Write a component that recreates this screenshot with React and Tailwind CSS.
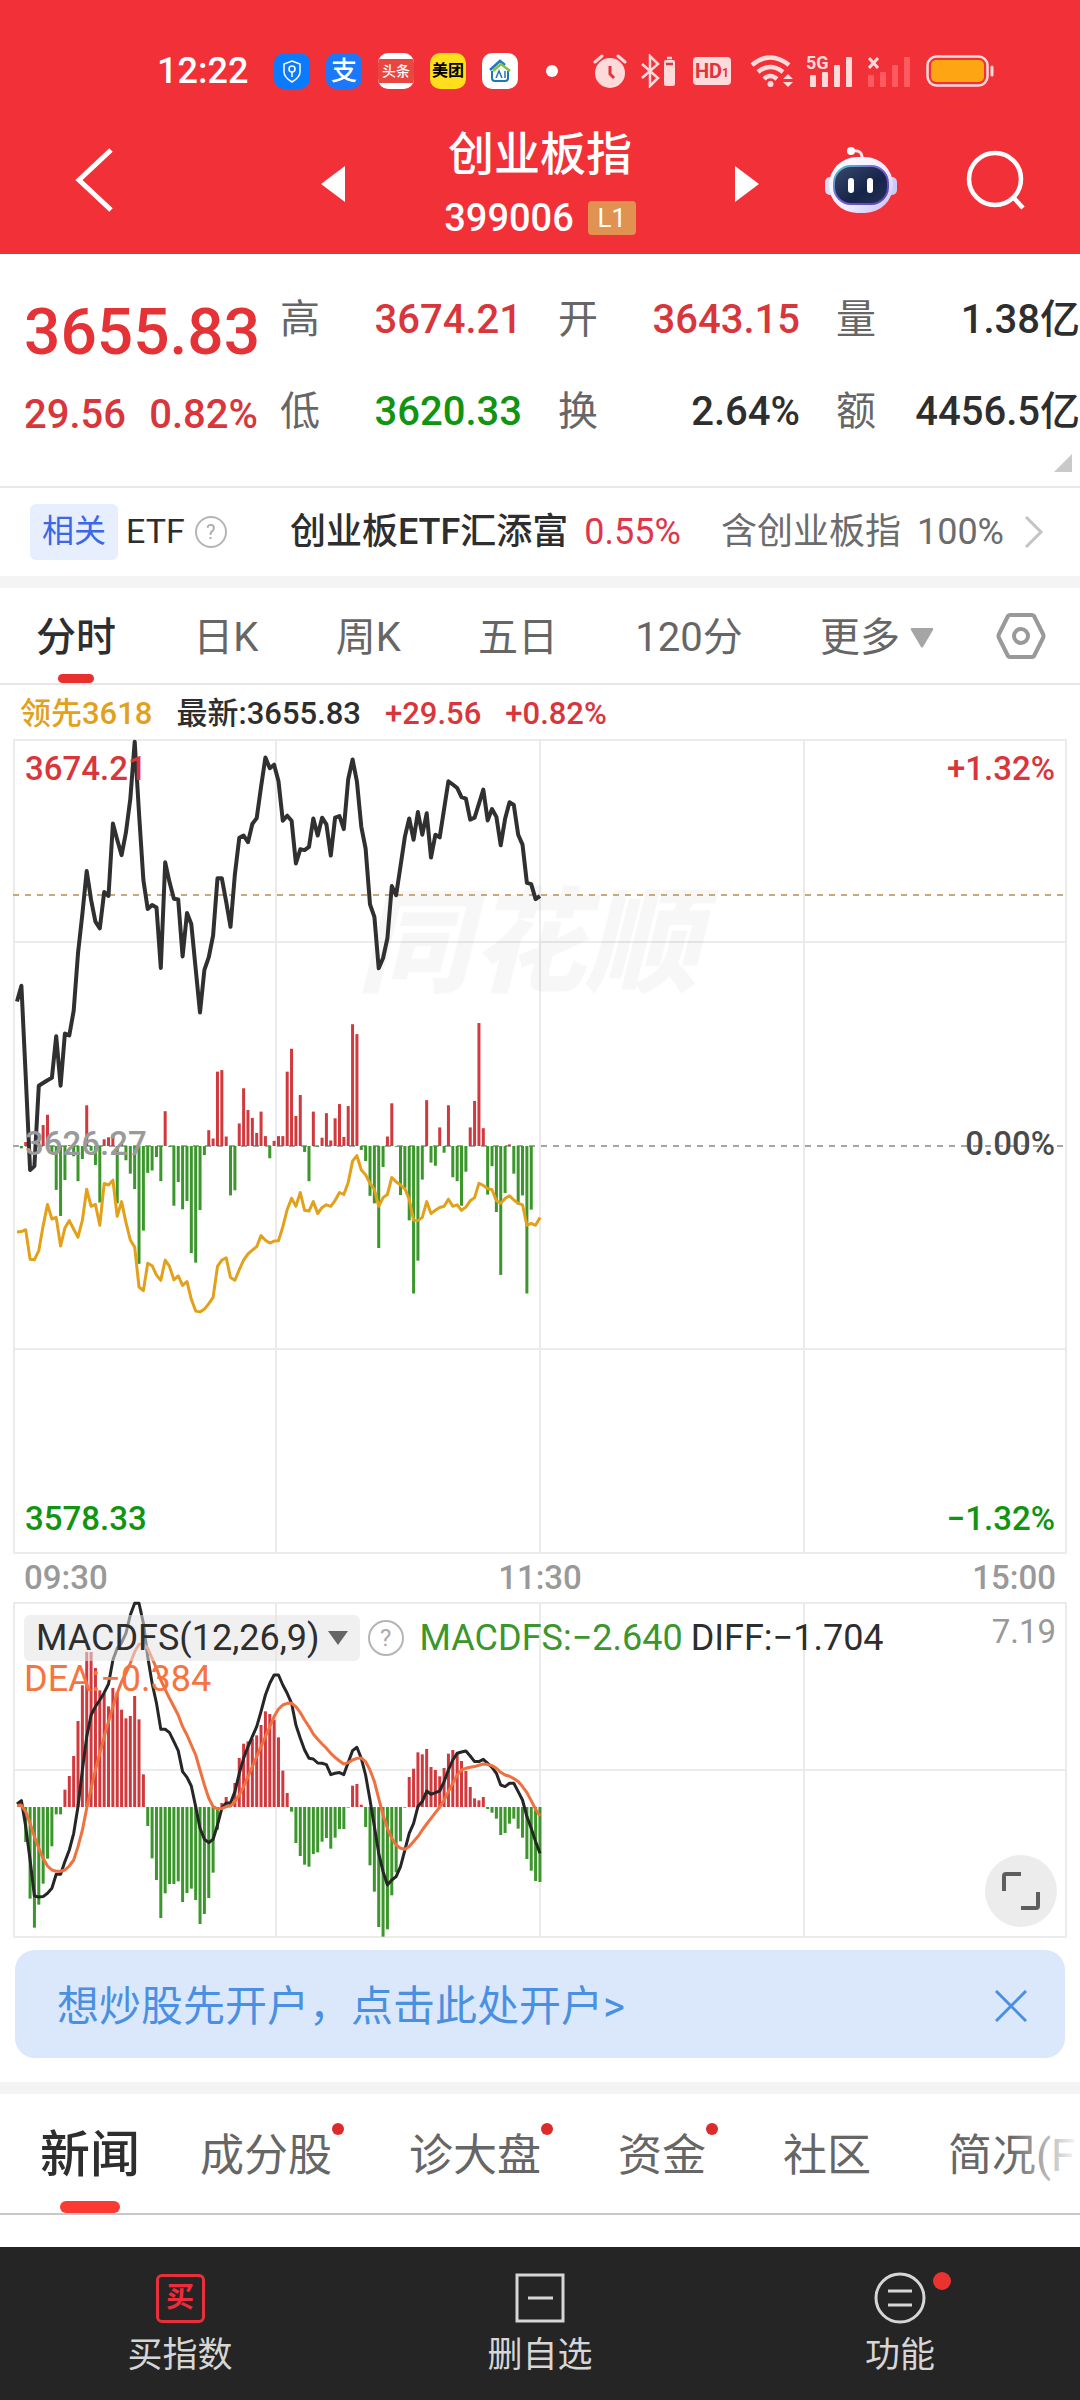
import React from 'react';

const PRICE = [
  712, 672, 900, 1138, 1128, 925, 918, 911, 905, 800, 925, 793, 798, 735, 590, 490, 382, 455, 510, 527,
  435, 445, 262, 303, 342, 285, 200, 55, 235, 405, 478, 468, 474, 627, 360, 410, 452, 454, 598, 488,
  516, 630, 740, 632, 600, 545, 400, 400, 460, 523, 390, 298, 292, 309, 263, 248, 170, 95, 122, 113,
  155, 255, 242, 255, 363, 327, 329, 321, 249, 292, 247, 264, 343, 247, 243, 276, 150, 100, 155, 270,
  325, 466, 498, 628, 602, 552, 420, 443, 370, 295, 249, 303, 233, 290, 236, 348, 290, 297, 225, 155,
  163, 172, 195, 199, 252, 247, 212, 176, 254, 225, 245, 317, 250, 208, 215, 290, 315, 412, 415, 453, 445,
];

const LEAD = [
  1295, 1294, 1289, 1364, 1365, 1342, 1280, 1225, 1262, 1258, 1330, 1285, 1266, 1288, 1308, 1265, 1187, 1230, 1225, 1278,
  1172, 1176, 1164, 1255, 1218, 1270, 1315, 1333, 1434, 1443, 1374, 1380, 1404, 1417, 1366, 1382, 1416, 1406, 1430, 1420,
  1465, 1495, 1497, 1490, 1476, 1460, 1382, 1366, 1360, 1410, 1417, 1390, 1366, 1350, 1341, 1332, 1304, 1316, 1323, 1318,
  1317, 1282, 1238, 1210, 1230, 1195, 1240, 1242, 1218, 1248, 1233, 1226, 1230, 1215, 1195, 1200, 1170, 1115, 1102, 1138,
  1150, 1172, 1187, 1230, 1208, 1200, 1157, 1168, 1176, 1186, 1212, 1265, 1266, 1258, 1218, 1248, 1240, 1233, 1230, 1212,
  1230, 1226, 1240, 1232, 1216, 1208, 1172, 1177, 1185, 1188, 1216, 1222, 1210, 1203, 1214, 1222, 1226, 1278, 1273, 1278, 1258,
];

const FLOW = [
  0, -6, 10, 0, 0, 20, 53, 79, -18, -111, -177, -86, 2, -26, -89, -33, 103, -12, -48, -143,
  17, 22, 30, -145, 5, -36, -70, -109, -298, -214, -68, -62, -28, -89, 88, -2, -151, -91, -160, -139,
  -271, -295, -162, -23, 40, 19, 188, 192, 24, -125, -112, 57, 146, 91, 71, 33, 87, 25, -31, 13,
  25, 25, 188, 246, 76, 129, -15, -89, 87, -2, 21, 83, 14, 70, 106, 23, 101, 308, 283, -10,
  -38, -126, -145, -258, -53, 24, 108, -2, -124, -106, -188, -373, -290, -85, 116, -42, -50, 47, -17, 103,
  -79, -89, -151, -65, 47, 114, 311, 45, -123, -51, -167, -326, -119, 4, -70, -148, -125, -373, -161, 0, 0,
];

const MACD = [
  0, 8, -105, -275, -362, -293, -230, -155, -118, -22, -22, 52, 93, 153, 258, 365, 465, 465, 417, 350,
  340, 302, 357, 344, 292, 266, 273, 333, 263, 98, -57, -154, -219, -333, -259, -231, -231, -223, -285, -258,
  -245, -279, -351, -321, -273, -197, -68, 12, 30, 15, 72, 147, 190, 197, 205, 215, 246, 287, 279, 262,
  209, 109, 42, -14, -108, -147, -173, -179, -141, -136, -104, -93, -125, -92, -66, -66, -2, 64, 69, 7,
  -60, -175, -254, -360, -389, -367, -265, -196, -103, -2, 90, 115, 164, 158, 174, 120, 111, 92, 117, 160,
  171, 163, 138, 108, 60, 26, 20, 30, -6, -17, -35, -84, -78, -50, -35, -65, -92, -156, -191, -222, -225,
];

const DIFF = [
  792, 782, 860, 960, 1068, 1071, 1070, 1060, 1045, 1003, 1003, 965, 930, 880, 800, 690, 590, 525, 500, 480,
  458, 432, 360, 325, 308, 280, 225, 190, 190, 250, 350, 430, 490, 568, 568, 578, 605, 632, 695, 712,
  738, 800, 865, 898, 908, 898, 855, 805, 789, 789, 755, 700, 655, 620, 590, 560, 515, 465, 430, 405,
  405, 435, 460, 490, 555, 595, 630, 655, 657, 669, 670, 674, 704, 700, 698, 704, 668, 632, 622, 655,
  705, 780, 860, 940, 995, 1035, 1020, 1010, 980, 930, 880, 850, 800, 785, 753, 763, 758, 753, 725, 690,
  660, 640, 636, 633, 648, 665, 665, 658, 670, 682, 700, 735, 740, 730, 730, 755, 780, 830, 865, 905, 940,
];

const DEA = [
  797, 796, 815, 850, 890, 925, 955, 978, 990, 994, 994, 990, 978, 960, 920, 870, 805, 745, 690, 640,
  590, 545, 500, 460, 425, 400, 370, 335, 313, 313, 325, 355, 385, 420, 448, 475, 500, 525, 560, 585,
  615, 645, 690, 735, 775, 800, 807, 806, 800, 798, 785, 765, 740, 710, 680, 650, 620, 590, 560, 530,
  507, 495, 490, 490, 500, 518, 540, 560, 582, 598, 612, 625, 640, 652, 663, 672, 668, 660, 655, 654,
  665, 690, 725, 775, 825, 865, 895, 915, 925, 928, 920, 905, 890, 870, 852, 835, 818, 802, 780, 755,
  730, 705, 690, 685, 682, 680, 676, 672, 674, 677, 685, 697, 705, 709, 716, 725, 740, 758, 782, 808, 828,
];

const xAt = (i) => 4 + i * 4.358;
const toLine = (data, scale, shift) =>
  data.map((v, i) => `${xAt(i).toFixed(1)},${(v * scale + shift).toFixed(1)}`).join(' ');

function Bars({ data, zero, scale }) {
  return data.map((v, i) =>
    v === 0 ? null : (
      <rect
        key={i}
        x={xAt(i) - 1.5}
        width="3"
        y={v > 0 ? zero - v * scale : zero}
        height={Math.abs(v) * scale}
        fill={v > 0 ? '#d03a3e' : '#3b962b'}
      />
    )
  );
}

function Grid({ height, rows }) {
  return (
    <g stroke="#ebebeb" strokeWidth="2" fill="none">
      <rect x="1" y="1" width="1052" height={height - 2} />
      {[263, 527, 791].map((x) => (
        <line key={x} x1={x} x2={x} y1="0" y2={height} />
      ))}
      {rows.map((y) => (
        <line key={y} x1="0" x2="1054" y1={y} y2={y} />
      ))}
    </g>
  );
}

function StatusBar() {
  return (
    <div className="flex h-[142px] items-center pl-[157px]">
      <span className="w-[117px] text-4xl font-medium">12:22</span>
      <div className="flex gap-4">
        <span className="flex size-9 items-center justify-center rounded-[10px] bg-[#0a7bff]">
          <svg viewBox="0 0 36 36" className="size-9" fill="none" stroke="#fff" strokeWidth="1.5">
            <path d="M18 8l8 3v8c0 4-3 7-8 10-5-3-8-6-8-10v-8z" />
            <circle cx="18" cy="16" r="3" />
            <path d="M18 19v5" />
          </svg>
        </span>
        <span className="flex size-9 items-center justify-center rounded-[10px] bg-[#1b78fb] text-[26px] leading-none font-medium">支</span>
        <span className="flex size-9 items-center overflow-hidden rounded-[10px] bg-white">
          <span className="flex h-6 w-full items-center justify-center bg-[#ea4640] text-sm leading-none font-medium">头条</span>
        </span>
        <span className="flex size-9 items-center justify-center rounded-[10px] bg-[#ffdf1b] text-base leading-none font-bold text-black">美团</span>
        <span className="flex size-9 items-center justify-center rounded-[10px] bg-white">
          <svg viewBox="0 0 36 36" className="size-9" fill="none" strokeWidth="2.5">
            <path d="M10 18v7q0 3 3 3h10q3 0 3-3v-7" stroke="#1c78b8" strokeWidth="2" />
            <path d="M8 17l10-9 5 4" stroke="#1c78c8" />
            <path d="M11 18l8-7 9 7" stroke="#7fc241" />
            <path d="M14 25l3-7 3 7M23 18v7" stroke="#1c78b8" strokeWidth="1.5" />
          </svg>
        </span>
      </div>
      <span className="ml-7 size-3 rounded-full bg-white" />
      <div className="ml-[35px] flex items-center text-[#ffdadb]">
        <svg viewBox="0 0 34 36" className="h-9 w-[34px]" fill="currentColor">
          <circle cx="17" cy="20" r="15" />
          <path d="M2 9l7-6M32 9l-7-6" stroke="currentColor" strokeWidth="3" strokeLinecap="round" />
          <path d="M17 13v8l4 4" fill="none" stroke="#e2323a" strokeWidth="3" />
        </svg>
        <svg viewBox="0 0 34 34" className="ml-[14px] h-[34px] w-[34px]" fill="none" stroke="currentColor" strokeWidth="2.5">
          <path d="M1 10l16 14-8 8V2l8 8L1 24" />
          <rect x="23" y="6" width="11" height="26" rx="2" fill="currentColor" stroke="none" />
          <path d="M26 4h5" />
          <path d="M25 10h7" stroke="#e2323a" />
        </svg>
        <span className="ml-[18px] flex h-7 w-[38px] items-center justify-center rounded bg-[#ffdadb] text-xl leading-none font-bold text-[#e2323a]">
          HD<span className="pt-1 text-xs">1</span>
        </span>
        <svg viewBox="0 0 44 34" className="ml-[19px] h-[34px] w-11" fill="none" stroke="currentColor" strokeWidth="4.5">
          <path d="M2 11q18-15 37 0M8 18q12-10 25 0M14 25q6-6 13 0" />
          <circle cx="20.5" cy="30" r="3" fill="currentColor" stroke="none" />
          <path d="M33 25l5-5 5 5zM33 28l5 5 5-5z" fill="currentColor" stroke="none" />
        </svg>
        <div className="relative ml-3">
          <svg viewBox="0 0 48 34" className="h-[34px] w-12" fill="currentColor">
            <rect x="4" y="21" width="6" height="12" rx="1" />
            <rect x="16" y="18" width="6" height="15" rx="1" />
            <rect x="28" y="11" width="6" height="22" rx="1" />
            <rect x="40" y="3" width="6" height="30" rx="1" />
          </svg>
          <span className="absolute top-0 left-0 text-lg leading-none font-bold">5G</span>
        </div>
        <svg viewBox="0 0 44 34" className="ml-[14px] h-[34px] w-11" fill="#ff5a60">
          <rect x="0" y="21" width="6" height="12" rx="1" />
          <rect x="12" y="18" width="6" height="15" rx="1" />
          <rect x="24" y="11" width="6" height="22" rx="1" />
          <rect x="36" y="3" width="6" height="30" rx="1" />
          <path d="M1 4l9 10M10 4L1 14" stroke="#ffdadb" strokeWidth="3" />
        </svg>
        <svg viewBox="0 0 68 32" className="ml-[14px] h-8 w-[68px]" fill="none">
          <rect x="1.5" y="1.5" width="60" height="29" rx="9" stroke="#ffdadb" strokeWidth="2.5" />
          <rect x="5" y="5" width="53" height="22" rx="5" fill="#fda512" />
          <path d="M66 12v8" stroke="#ffdadb" strokeWidth="3" strokeLinecap="round" />
        </svg>
      </div>
    </div>
  );
}

function Header() {
  return (
    <header className="bg-[#f13038] text-white">
      <StatusBar />
      <div className="-mt-4 grid h-32 grid-cols-[1fr_438px_1fr]">
        <div className="flex items-center pb-5 pl-[75px]">
          <button type="button" aria-label="返回">
            <svg viewBox="0 0 40 66" className="h-[66px] w-10" fill="none" stroke="currentColor" strokeWidth="5">
              <path d="M36 3L4 33l32 30" />
            </svg>
          </button>
        </div>
        <div className="flex justify-between">
          <button type="button" aria-label="上一个" className="pb-3">
            <svg viewBox="0 0 24 36" className="h-9 w-6" fill="currentColor"><path d="M24 0v36L0 18z" /></svg>
          </button>
          <div className="flex flex-col items-center">
            <h1 className="text-[46px] leading-[56px] font-medium">创业板指</h1>
            <div className="mt-1 flex items-center gap-[14px]">
              <span className="text-[38px] leading-[64px] font-medium">399006</span>
              <span className="flex h-[34px] w-12 items-center justify-center rounded bg-[#e19150] text-[26px] leading-none">L1</span>
            </div>
          </div>
          <button type="button" aria-label="下一个" className="pb-3">
            <svg viewBox="0 0 24 36" className="h-9 w-6" fill="currentColor"><path d="M0 0v36l24-18z" /></svg>
          </button>
        </div>
        <div className="flex items-center justify-between pr-[52px] pb-5 pl-[66px]">
          <button type="button" aria-label="智能助手">
            <svg viewBox="0 0 72 68" className="h-[68px] w-[72px]">
              <defs>
                <linearGradient id="head" x1="0" y1="0" x2="1" y2="1">
                  <stop offset="0" stopColor="#fff" />
                  <stop offset=".6" stopColor="#ecebff" />
                  <stop offset="1" stopColor="#c9b8f2" />
                </linearGradient>
                <linearGradient id="rim" x1="0" y1="0" x2="1" y2="1">
                  <stop offset="0" stopColor="#52c7c9" />
                  <stop offset=".5" stopColor="#7a55d8" />
                  <stop offset="1" stopColor="#5048a8" />
                </linearGradient>
                <linearGradient id="visor" x1="0" y1="0" x2="1" y2="1">
                  <stop offset="0" stopColor="#39486e" />
                  <stop offset=".6" stopColor="#17244a" />
                  <stop offset="1" stopColor="#253056" />
                </linearGradient>
              </defs>
              <path d="M27 5q11-2 10 9" fill="none" stroke="#ffe5ec" strokeWidth="3" />
              <circle cx="26" cy="5" r="4" fill="#fff" />
              <rect x="0" y="31" width="12" height="18" rx="5" fill="#dcdcff" />
              <rect x="60" y="31" width="12" height="18" rx="5" fill="#c9ccfa" />
              <rect x="4" y="11" width="64" height="56" rx="28" fill="url(#head)" />
              <rect x="9" y="20" width="54" height="38" rx="17" fill="url(#visor)" stroke="url(#rim)" strokeWidth="2" />
              <rect x="23" y="32" width="6" height="15" rx="3" fill="#fff" />
              <rect x="42" y="32" width="6" height="15" rx="3" fill="#fff" />
            </svg>
          </button>
          <button type="button" aria-label="搜索">
            <svg viewBox="0 0 62 62" className="size-[62px]" fill="none" stroke="currentColor" strokeWidth="4.5">
              <circle cx="29" cy="30" r="26" />
              <path d="M47 48l10 11" />
            </svg>
          </button>
        </div>
      </div>
    </header>
  );
}

const RED = 'text-[#d9363c]';
const GREEN = 'text-[#119411]';
const INK = 'text-[#2e2e2e]';

function Pair({ label, value, tone }) {
  return (
    <div className="flex items-center justify-between">
      <dt className="text-[#666]">{label}</dt>
      <dd className={`font-medium ${tone}`}>{value}</dd>
    </div>
  );
}

function Quote() {
  return (
    <section className="relative grid h-[234px] grid-cols-[280fr_278fr_278fr_244fr] border-b-2 border-[#e8e8e8] text-[40px] leading-[60px]">
      <div className={`pt-[47px] pl-6 ${RED}`}>
        <div className="text-[64px] leading-[64px] font-medium text-[#e43236]">3655.83</div>
        <div className="mt-5 flex justify-between pr-[22px] font-medium">
          <span>29.56</span>
          <span>0.82%</span>
        </div>
      </div>
      <dl className="flex flex-col gap-8 pt-9 pr-9">
        <Pair label="高" value="3674.21" tone={RED} />
        <Pair label="低" value="3620.33" tone={GREEN} />
      </dl>
      <dl className="flex flex-col gap-8 pt-9 pr-9">
        <Pair label="开" value="3643.15" tone={RED} />
        <Pair label="换" value="2.64%" tone={INK} />
      </dl>
      <dl className="flex flex-col gap-8 pt-9">
        <Pair label="量" value="1.38亿" tone={INK} />
        <Pair label="额" value="4456.5亿" tone={INK} />
      </dl>
      <svg viewBox="0 0 18 18" className="absolute right-2 bottom-[14px] size-[18px]" fill="#c9c9c9"><path d="M18 0v18H0z" /></svg>
    </section>
  );
}

function Help({ className }) {
  return (
    <button type="button" aria-label="说明" className={`flex items-center justify-center rounded-full border-2 border-[#b5b5b5] leading-none text-[#aaa] ${className}`}>
      ?
    </button>
  );
}

function EtfRow() {
  return (
    <section className="flex h-[88px] items-center pr-[36px] pl-[30px] text-4xl">
      <span className="flex h-14 items-center rounded-md bg-[#e7eefd] px-3 text-[32px] text-[#3c67e6]">相关</span>
      <span className={`ml-2 text-[34px] ${INK}`}>ETF</span>
      <Help className="ml-[10px] size-8 text-xl" />
      <a href="#etf" className="ml-auto flex items-center">
        <span className={`font-medium ${INK}`}>创业板ETF汇添富</span>
        <span className="ml-4 text-[#e0354a]">0.55%</span>
        <span className="ml-10 text-[#6c6c6c]">含创业板指</span>
        <span className="ml-4 text-[#6c6c6c]">100%</span>
        <svg viewBox="0 0 20 32" className="ml-5 h-8 w-5" fill="none" stroke="#c4c4c4" strokeWidth="3"><path d="M2 1l15 15L2 31" /></svg>
      </a>
    </section>
  );
}

function PeriodTabs() {
  return (
    <nav className="flex h-[97px] items-center justify-between border-b-2 border-[#e6e6e6] pr-[34px] pl-[36px] text-[40px] text-[#666]">
      <button type="button" className={`relative flex h-full items-center pt-1 font-medium ${INK}`}>
        分时
        <span className="absolute bottom-0 left-1/2 h-[9px] w-9 -translate-x-1/2 rounded-full bg-[#e8302f]" />
      </button>
      <button type="button" className="pt-1">日K</button>
      <button type="button" className="pt-1">周K</button>
      <button type="button" className="pt-1">五日</button>
      <button type="button" className="pt-1">120分</button>
      <div className="flex items-center gap-[62px]">
        <button type="button" className="flex items-center gap-[10px] pt-1">
          更多
          <svg viewBox="0 0 24 20" className="h-5 w-6" fill="#a5a5a5"><path d="M2 0h20q2 0 1 2L13 19q-1 1-2 0L1 2Q0 0 2 0z" /></svg>
        </button>
        <button type="button" aria-label="设置">
          <svg viewBox="0 0 50 48" className="h-12 w-[50px]" fill="none" stroke="#999" strokeWidth="4" strokeLinejoin="round">
            <path d="M14 3h22q1 0 2 1l9 18q1 2 0 4l-9 18q-1 1-2 1H14q-1 0-2-1L3 26q-1-2 0-4l9-18q1-1 2-1z" />
            <circle cx="25" cy="24" r="7" />
          </svg>
        </button>
      </div>
    </nav>
  );
}

function PriceChart() {
  return (
    <div className="relative mx-[13px]">
      <svg viewBox="0 0 1054 815" className="w-full">
        <Grid height={815} rows={[203, 610]} />
      </svg>
      <div className="absolute top-[140px] left-[344px] text-[114px] leading-[130px] font-black text-black/3 italic">同花顺</div>
      <svg viewBox="0 0 1054 815" className="absolute inset-0 w-full">
        <path d="M0 156H1054" stroke="#c9a97c" strokeWidth="2" strokeDasharray="6 6" />
        <path d="M0 407H1054" stroke="#a5a5a5" strokeWidth="2" strokeDasharray="6 6" />
        <Bars data={FLOW} zero={407} scale={0.3954} />
        <polyline points={toLine(LEAD, 0.3954, -19)} fill="none" stroke="#e3a01b" strokeWidth="3" strokeLinejoin="round" />
        <polyline points={toLine(PRICE, 0.3954, -19)} fill="none" stroke="#303030" strokeWidth="4" strokeLinejoin="round" />
      </svg>
      <div className="absolute inset-0 flex flex-col justify-between px-3 pt-[11px] pb-4 text-[33px] leading-[38px] font-medium">
        <div className={`flex justify-between ${RED}`}><span>3674.21</span><span>+1.32%</span></div>
        <div className="flex justify-between text-[#4a4a4a]"><span className="text-[#9a9a9a]">3626.27</span><span>0.00%</span></div>
        <div className={`flex justify-between ${GREEN}`}><span>3578.33</span><span>−1.32%</span></div>
      </div>
    </div>
  );
}

function MacdChart() {
  return (
    <div className="relative mx-[13px]">
      <svg viewBox="0 0 1054 336" className="w-full overflow-visible">
        <Grid height={336} rows={[168]} />
        <Bars data={MACD} zero={205} scale={0.3333} />
        <polyline points={toLine(DIFF, 0.3333, -62)} fill="none" stroke="#262626" strokeWidth="3" strokeLinejoin="round" />
        <polyline points={toLine(DEA, 0.3333, -62)} fill="none" stroke="#f07040" strokeWidth="3" strokeLinejoin="round" />
      </svg>
      <div className="absolute inset-x-0 top-[13px] px-[11px] text-4xl leading-[46px]">
        <div className="flex items-center">
          <button type="button" className={`flex items-center gap-2 rounded-md bg-[#e4e4e4]/55 pr-3 pl-3 leading-[46px] ${INK}`}>
            MACDFS(12,26,9)
            <svg viewBox="0 0 20 14" className="h-[14px] w-5" fill="#666"><path d="M0 0h20L10 14z" /></svg>
          </button>
          <Help className="ml-2 size-9 text-2xl" />
          <span className="ml-4 text-[#3b962b]">MACDFS:−2.640</span>
          <span className={`ml-2 ${INK}`}>DIFF:−1.704</span>
          <span className="ml-auto pb-3 text-[33px] leading-[34px] text-[#999]">7.19</span>
        </div>
        <div className="-mt-0.5 leading-[40px] text-[#f5743f]">DEA:−0.384</div>
      </div>
      <button type="button" aria-label="全屏" className="absolute right-[10px] bottom-[11px] flex size-[72px] items-center justify-center rounded-full bg-[#ececec]">
        <svg viewBox="0 0 38 38" className="size-[38px]" fill="none" stroke="#5e5e5e" strokeWidth="4">
          <path d="M2 19V4q0-2 2-2h15M36 20v14q0 2-2 2H19" />
        </svg>
      </button>
    </div>
  );
}

const SECTIONS = [
  { name: '成分股', dot: true },
  { name: '诊大盘', dot: true },
  { name: '资金', dot: true },
  { name: '社区', dot: false },
  { name: '简况(F', dot: false },
];

function SectionTabs() {
  return (
    <nav className="relative flex h-[121px] items-center overflow-hidden border-b-2 border-[#c8c8c8] pl-10 text-[44px] whitespace-nowrap text-[#666]">
      <button type="button" className={`relative mr-[60px] flex h-full items-center pt-1 text-[50px] font-medium ${INK}`}>
        新闻
        <span className="absolute bottom-0 left-5 h-3 w-[60px] rounded-full bg-[#fb3a33]" />
      </button>
      <div className="flex gap-[77px] pt-1">
        {SECTIONS.map((s) => (
          <button key={s.name} type="button" className="relative">
            {s.name}
            {s.dot && <span className="absolute top-0 -right-3 size-3 rounded-full bg-[#dd2b2b]" />}
          </button>
        ))}
      </div>
      <span className="absolute inset-y-0 right-0 w-[70px] bg-linear-to-r from-white/0 to-white" />
    </nav>
  );
}

function BottomNav() {
  const item = 'flex flex-col items-center gap-[10px]';
  return (
    <nav className="grid h-[153px] grid-cols-3 items-start bg-[#252525] pt-[25px] text-[35px] leading-[44px] text-[#d6d6d6]">
      <button type="button" className={item}>
        <span className="flex size-[52px] items-center justify-center">
          <span className="flex size-[49px] items-center justify-center rounded-md border-3 border-[#e8303a] text-[28px] leading-none font-bold text-[#f02c3c]">买</span>
        </span>
        买指数
      </button>
      <button type="button" className={item}>
        <svg viewBox="0 0 52 52" className="size-[52px]" fill="none" stroke="currentColor" strokeWidth="3">
          <path d="M3 3h46v46H3zM14 26h25" />
        </svg>
        删自选
      </button>
      <button type="button" className={item}>
        <span className="relative">
          <svg viewBox="0 0 52 52" className="size-[52px]" fill="none" stroke="currentColor" strokeWidth="3">
            <circle cx="26" cy="26" r="24" />
            <path d="M14 19h24M14 33h24" />
          </svg>
          <span className="absolute top-0 -right-[25px] size-[18px] rounded-full bg-[#ea3330]" />
        </span>
        功能
      </button>
    </nav>
  );
}

export default function App() {
  return (
    <div className="w-full overflow-hidden bg-white font-['Roboto','Noto_Sans_CJK_SC',sans-serif]">
      <Header />
      <main>
        <Quote />
        <EtfRow />
        <div className="h-3 bg-[#f4f4f4]" />
        <PeriodTabs />
        <div className="flex h-[54px] items-center gap-6 pt-1 pl-5 text-[31px] font-medium">
          <span className="text-[#e3a01b]">领先3618</span>
          <span className={INK}>最新:3655.83</span>
          <span className={RED}>+29.56</span>
          <span className={RED}>+0.82%</span>
        </div>
        <PriceChart />
        <div className="mx-6 flex h-12 items-center justify-between text-[33px] font-medium text-[#999]">
          <span>09:30</span>
          <span>11:30</span>
          <span>15:00</span>
        </div>
        <MacdChart />
        <div className="mx-[15px] mt-3 flex h-[108px] items-center justify-between rounded-[20px] bg-[#dbe8fb] pt-1 pr-[38px] pl-[42px] text-[#4a90e2]">
          <a href="#open" className="text-[42px]">想炒股先开户，点击此处开户&gt;</a>
          <button type="button" aria-label="关闭">
            <svg viewBox="0 0 32 32" className="size-8" fill="none" stroke="currentColor" strokeWidth="3"><path d="M1 1l30 30M31 1L1 31" /></svg>
          </button>
        </div>
        <div className="mt-6 h-3 bg-[#f4f4f4]" />
        <SectionTabs />
        <div className="h-8" />
      </main>
      <BottomNav />
    </div>
  );
}
